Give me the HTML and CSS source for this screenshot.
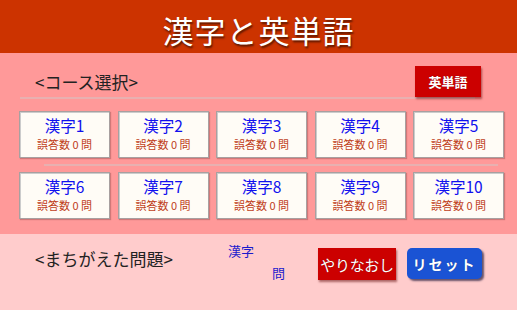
FILE: index.html
```html
<!DOCTYPE html>
<html>
<head>
    <meta charset="utf-8" />
    <title>漢字と英単語</title>
    <link rel="stylesheet" href="styles.css">
</head>
<body>
    <h1 class="title">漢字と英単語</h1>
    <main class="courses">
        <div class="course-head">
            <span class="label">&lt;コース選択&gt;</span>
            <a class="btn btn-red btn-eng">英単語</a>
        </div>
        <div class="rule"></div>
        <div class="grid">
            <div class="card"><p class="name">漢字1</p><p class="miss">誤答数 0 問</p></div>
            <div class="card"><p class="name">漢字2</p><p class="miss">誤答数 0 問</p></div>
            <div class="card"><p class="name">漢字3</p><p class="miss">誤答数 0 問</p></div>
            <div class="card"><p class="name">漢字4</p><p class="miss">誤答数 0 問</p></div>
            <div class="card"><p class="name">漢字5</p><p class="miss">誤答数 0 問</p></div>
        </div>
        <div class="rule rule-mid"></div>
        <div class="grid">
            <div class="card"><p class="name">漢字6</p><p class="miss">誤答数 0 問</p></div>
            <div class="card"><p class="name">漢字7</p><p class="miss">誤答数 0 問</p></div>
            <div class="card"><p class="name">漢字8</p><p class="miss">誤答数 0 問</p></div>
            <div class="card"><p class="name">漢字9</p><p class="miss">誤答数 0 問</p></div>
            <div class="card"><p class="name">漢字10</p><p class="miss">誤答数 0 問</p></div>
        </div>
    </main>
    <footer class="missed">
        <span class="label missed-label">&lt;まちがえた問題&gt;</span>
        <div class="missed-count">
            <span class="kind">漢字</span>
            <span class="unit">問</span>
        </div>
        <a class="btn btn-red btn-retry">やりなおし</a>
        <a class="btn btn-blue btn-reset">リセット</a>
    </footer>
</body>
</html>
```

FILE: styles.css
```css
* {padding: 0;margin: 0;box-sizing: border-box;}
html, body {width: 517px;height: 310px;overflow: hidden;}
body {font-family: "Noto Sans CJK JP", "Noto Sans", sans-serif;background: #ffcccc;}

.title {
    height: 53px;
    background: #cc3300;
    color: #fff;
    font-size: 31px;
    font-weight: normal;
    line-height: 60px;
    text-align: center;
    text-shadow: 1px 2px 2px rgba(0,0,0,.55);
    letter-spacing: 1px;
}

.courses {background: #ff9999;height: 181px;padding-top: 13px;}
.course-head {display: flex;align-items: center;height: 31px;padding: 0 36px 0 35px;}
.label {font-size: 17px;color: #222;flex: 1;}

.btn {
    display: flex;
    align-items: center;
    justify-content: center;
    color: #fff;
    white-space: nowrap;
    text-shadow: 0 0 1px rgba(0,0,0,.4);
}
.btn-red {background: #cc0000;box-shadow: 1px 2px 2px rgba(90,0,0,.5);}
.btn-blue {background: #1a53d4;border-radius: 5px;box-shadow: 2px 2px 2px rgba(0,0,40,.6);}
.btn-eng {width: 66px;height: 31px;font-size: 13px;font-weight: bold;}

.rule {height: 2px;margin: 0 42px 0 20px;background: #e8b0b0;}
.rule-mid {margin: 6px 19px 6px 44px;}

.grid {
    display: grid;
    grid-template-columns: repeat(5, 91px);
    column-gap: 7.5px;
    padding-left: 19px;
    margin-top: 12px;
}
.rule-mid + .grid {margin-top: 0;}
.card {
    height: 47px;
    background: #fffcf6;
    border: 1px solid #a8a0a0;
    box-shadow: inset 1px 1px 0 #ccc, 1px 1px 1px rgba(120,60,60,.35);
    text-align: center;
    padding-top: 3px;
}
.card .name {font-size: 15.5px;color: #1010ee;line-height: 21px;}
.card .miss {font-size: 11px;color: #c0401a;line-height: 17px;}

.missed {display: flex;align-items: flex-start;height: 76px;padding: 14px 0 0 35px;}
.missed-label {flex: none;width: 193px;margin-top: -2px;}
.missed-count {width: 57px;height: 40px;position: relative;font-size: 13px;color: #1a1acc;}
.missed-count .kind {position: absolute;left: 0;top: -7px;}
.missed-count .unit {position: absolute;left: 44px;top: 15px;}
.btn-retry {margin-left: 33px;width: 78px;height: 32px;font-size: 15px;letter-spacing: -0.3px;}
.btn-reset {margin-left: 11px;width: 75px;height: 31px;font-size: 14px;font-weight: bold;letter-spacing: 2px;}
```
